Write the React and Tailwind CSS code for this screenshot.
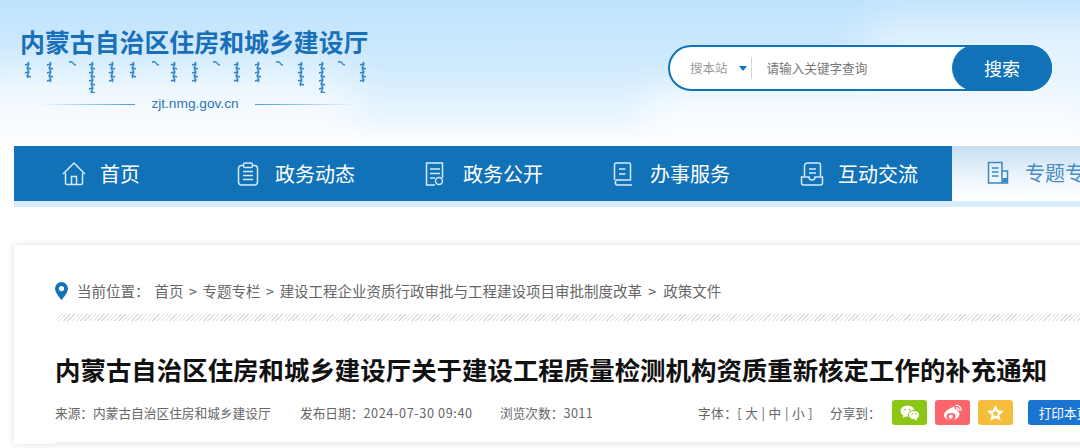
const FONT = "font-['Noto_Sans_CJK_SC','Liberation_Sans',sans-serif]";

const NAV = [
  { label: "首页", icon: <HomeIcon />, w: "w-[159px]", pad: "pl-[47px]", gap: "gap-[13px]" },
  { label: "政务动态", icon: <ClipIcon />, w: "w-[188px]", pad: "pl-[64px]", gap: "gap-[16px]" },
  { label: "政务公开", icon: <DocIcon />, w: "w-[187px]", pad: "pl-[64px]", gap: "gap-[18px]" },
  { label: "办事服务", icon: <GuideIcon />, w: "w-[187px]", pad: "pl-[65px]", gap: "gap-[17px]" },
  { label: "互动交流", icon: <TrayIcon />, w: "w-[217px]", pad: "pl-[65px]", gap: "gap-[14px]" },
];

// x and length of each wavy stem in the decorative line under the logo title
const STEMS = [
  [28, 16], [50, 19], [72, 5], [92, 29], [112, 17], [133, 15], [155, 3], [174, 17], [195, 20],
  [216, 6], [237, 17], [258, 18], [279, 6], [301, 22], [322, 30], [341, 6], [363, 20],
];

function stemPath(x, len) {
  if (len < 8) return `M${x - 3} 5q3 -1 4 1q1 2 3 2`;
  let d = `M${x} 5`;
  for (let y = 5, i = 0; y < 5 + len; y += 4, i++) {
    const dir = i % 2 ? -1.6 : 1.6;
    d += `q${dir} 2 0 4`;
    d += `m0 -2l${i % 2 ? 3 : -3} 1m${i % 2 ? -3 : 3} -1m0 2`;
  }
  return d;
}

function HomeIcon() {
  return (
    <svg width="26" height="26" viewBox="0 0 26 26" fill="none" stroke="currentColor" strokeWidth="1.5" className="text-[#d5e9f8]">
      <path d="M2 13 13 2l11 11" />
      <path d="M4.500 12v10a1.500 1.500 0 0 0 1.500 1.500h14a1.500 1.500 0 0 0 1.500-1.500V12" />
      <path d="M10.500 23.500v-8h5v8" />
    </svg>
  );
}

function ClipIcon() {
  return (
    <svg width="22" height="24" viewBox="0 0 22 24" fill="none" stroke="currentColor" strokeWidth="1.5" className="text-[#d5e9f8]">
      <rect x="1.500" y="3.500" width="19" height="19.500" rx="3" />
      <rect x="6.500" y="1" width="9" height="4.500" rx="1.500" fill="#1272b8" />
      <path d="M6 9.500h10M6 13.500h10M6 17.500h10" />
    </svg>
  );
}

function DocIcon() {
  return (
    <svg width="20" height="24" viewBox="0 0 20 24" fill="none" stroke="currentColor" strokeWidth="1.5" className="text-[#d5e9f8]">
      <path d="M10 23H1.500V1h16v15" />
      <path d="M5 7h10M5 11.500h10M5 16h5" />
      <circle cx="14" cy="19" r="3.500" />
    </svg>
  );
}

function GuideIcon() {
  return (
    <svg width="20" height="24" viewBox="0 0 20 24" fill="none" stroke="currentColor" strokeWidth="1.5" className="text-[#d5e9f8]">
      <path d="M1.500 18V2.500a1.500 1.500 0 0 1 1.500-1.500h13a1.500 1.500 0 0 1 1.500 1.500V18H6a2.500 2.500 0 0 0-2 5h15" />
      <path d="M6 7h6.500M6 12h6.500" />
    </svg>
  );
}

function TrayIcon() {
  return (
    <svg width="24" height="24" viewBox="0 0 24 24" fill="none" stroke="currentColor" strokeWidth="1.5" className="text-[#d5e9f8]">
      <path d="M4.500 14V4a3 3 0 0 1 3-3h11a2 2 0 0 1 2 2v12" />
      <path d="M9 7h7M9 11h7" />
      <path d="M1.500 15v6a2 2 0 0 0 2 2h17a2 2 0 0 0 2-2v-6H15a3 3 0 0 1-6 0z" />
    </svg>
  );
}

function BookIcon() {
  return (
    <svg width="22" height="24" viewBox="0 0 22 24" fill="none" stroke="currentColor" strokeWidth="1.5">
      <path d="M15 22H1.500V1.500H15z" />
      <path d="M15 10h5.500v12H15" />
      <path d="M5 7h6.500M5 11h6.500M5 15h6.500" />
      <rect x="15.500" y="17" width="4.500" height="4.500" fill="currentColor" stroke="none" />
    </svg>
  );
}

function PinIcon() {
  return (
    <svg width="13" height="18" viewBox="0 0 13 18" className="text-[#1272b8]">
      <path
        fill="currentColor"
        fillRule="evenodd"
        d="M6.500 0A6.500 6.500 0 0 0 0 6.500C0 11 6.500 18 6.500 18S13 11 13 6.500A6.500 6.500 0 0 0 6.500 0zm0 4a2.600 2.600 0 1 1 0 5.200 2.600 2.600 0 0 1 0-5.200z"
      />
    </svg>
  );
}

function WechatIcon() {
  return (
    <svg width="20" height="16" viewBox="0 0 20 16" fill="#fff">
      <ellipse cx="7.500" cy="6" rx="7" ry="5.600" />
      <path d="M3.500 9.500 3 13l3.500-2z" />
      <ellipse cx="14" cy="10" rx="5.600" ry="4.600" stroke="#8cc716" strokeWidth="1" />
      <path d="M16.500 13.500 17.500 16l-3.500-2z" />
      <circle cx="5.200" cy="4.600" r="0.900" fill="#8cc716" />
      <circle cx="9.800" cy="4.600" r="0.900" fill="#8cc716" />
      <circle cx="12.300" cy="9" r="0.700" fill="#8cc716" />
      <circle cx="15.800" cy="9" r="0.700" fill="#8cc716" />
    </svg>
  );
}

function WeiboIcon() {
  return (
    <svg width="20" height="17" viewBox="0 0 20 17" fill="none">
      <path
        fill="#fff"
        fillRule="evenodd"
        d="M8 4c2-1.500 3.500-1.500 3.800-.5.200.7 0 1.500-.2 2 1.800-.6 3.200-.3 3.200 1 0 .6-.3 1-.3 1C16 8 16.500 9 16.500 10c0 3-3.700 6-8.200 6C4.200 16 1 14 1 11c0-2.300 3-5.500 7-7zm0 5A4.500 3.400 0 1 0 8 15.800 4.500 3.400 0 1 0 8 9z"
      />
      <circle cx="7.800" cy="12.400" r="2" fill="#fff" />
      <path d="M13 1.500c3-.5 5.500 2 5 5M13.500 4c1.500-.2 2.700 1 2.500 2.500" stroke="#fff" strokeWidth="1.300" strokeLinecap="round" />
    </svg>
  );
}

function StarIcon() {
  return (
    <svg width="17" height="16" viewBox="0 0 17 16">
      <path
        fill="#fff"
        fillRule="evenodd"
        d="M8.500 0l2.500 5.300 5.800.7-4.300 4 1.100 5.800-5.100-2.900-5.100 2.900 1.100-5.800L.2 6l5.800-.7zM8.500 5l-1 2.200-2.400.3 1.800 1.600-.5 2.400 2.100-1.200 2.100 1.200-.5-2.400 1.800-1.600-2.400-.3z"
      />
    </svg>
  );
}

function Header() {
  return (
    <div className="relative h-[146px] overflow-hidden bg-[linear-gradient(180deg,#bfe3fd_0%,#cfeafd_45%,#e9f5fe_80%,#ffffff_100%)]">
      {/* clouds */}
      <div className="absolute left-[-60px] top-[70px] h-[90px] w-[420px] rounded-full bg-white/60 blur-[22px]" />
      <div className="absolute left-[860px] top-[20px] h-[70px] w-[300px] rounded-full bg-white/50 blur-[20px]" />
      <div className="absolute left-[640px] top-[90px] h-[60px] w-[460px] rounded-full bg-white/70 blur-[18px]" />

      <div className="relative flex items-start justify-between pl-[20px] pr-[28px] pt-[25px]">
        <div className="w-[350px]">
          <div className="whitespace-nowrap text-[24.900px] font-bold leading-[32px] text-[#1a70b8]">
            内蒙古自治区住房和城乡建设厅
          </div>
          <svg width="350" height="36" viewBox="20 0 350 36" fill="none" stroke="#2f86c8" strokeWidth="1.400" className="block">
            {STEMS.map(([x, len]) => (
              <path key={x} d={stemPath(x, len)} />
            ))}
          </svg>
          <div className="mt-[2px] flex items-center">
            <span className="ml-[20px] h-px w-[95px] bg-gradient-to-r from-transparent to-[#4f9bd4]" />
            <span className="w-[120px] text-center font-['Liberation_Sans',sans-serif] text-[13.700px] leading-[18px] text-[#2a76b5]">
              zjt.nmg.gov.cn
            </span>
            <span className="h-px w-[100px] bg-gradient-to-r from-[#4f9bd4] to-transparent" />
          </div>
        </div>

        <div className="mt-[20px] flex h-[46px] w-[384px] items-center rounded-full border-2 border-[#1272b8] bg-white">
          <span className="ml-[20px] text-[12.500px] text-[#9a9a9a]">搜本站</span>
          <span className="ml-[11px] h-0 w-0 border-x-[4px] border-t-[5px] border-x-transparent border-t-[#1272b8]" />
          <span className="ml-[4px] h-[22px] w-px bg-[#d4d4d4]" />
          <span className="ml-[15px] text-[12.600px] text-[#777]">请输入关键字查询</span>
          <span className="ml-auto mr-[-2px] flex h-[46px] w-[100px] items-center justify-center rounded-full bg-[#1272b8] text-[18px] text-white">
            搜索
          </span>
        </div>
      </div>
    </div>
  );
}

function Nav() {
  return (
    <div className="ml-[14px] w-[1200px] border-b-[6px] border-[#d9ecfb]">
      <div className="flex h-[55px] items-stretch bg-[#1272b8] text-white">
        {NAV.map((n) => (
          <div key={n.label} className={`flex items-center ${n.gap} ${n.w} ${n.pad}`}>
            {n.icon}
            <span className="text-[20px]">{n.label}</span>
          </div>
        ))}
        <div className="mt-[-2px] flex flex-1 items-center gap-[16px] bg-[linear-gradient(180deg,#c2dcf0_0%,#eef6fc_60%,#ffffff_100%)] pl-[35px] text-[#3b87c4]">
          <BookIcon />
          <span className="whitespace-nowrap text-[20px] text-[#4a8cc2]">专题专栏</span>
        </div>
      </div>
    </div>
  );
}

function Article() {
  return (
    <div className="ml-[14px] mt-[38px] w-[1200px] bg-white pl-[41px] pt-[35px] shadow-[0_0_8px_rgba(0,0,0,0.12)]">
      <div className="flex h-[22px] items-center text-[14.500px] text-[#666]">
        <PinIcon />
        <span className="ml-[9px]">当前位置：</span>
        <span className="ml-[5px]">首页</span>
        <span className="mx-[5.500px]">&gt;</span>
        <span>专题专栏</span>
        <span className="mx-[5.500px]">&gt;</span>
        <span>建设工程企业资质行政审批与工程建设项目审批制度改革</span>
        <span className="ml-[6px] mr-[7px]">&gt;</span>
        <span>政策文件</span>
      </div>
      <div className="ml-[2px] mt-[12px] h-[7px] bg-[repeating-linear-gradient(135deg,#dcdcdc_0px,#dcdcdc_1px,#ffffff_1px,#ffffff_3px)]" />
      <h1 className="mt-[28px] whitespace-nowrap text-[25.440px] font-bold leading-[40px] text-[#111]">
        内蒙古自治区住房和城乡建设厅关于建设工程质量检测机构资质重新核定工作的补充通知
      </h1>
      <div className="mt-[11px] flex h-[25px] items-center whitespace-nowrap text-[12.700px] text-[#666]">
        <span className="w-[245px]">来源：内蒙古自治区住房和城乡建设厅</span>
        <span className="w-[200px]">
          发布日期：<span className="tracking-[0.6px]">2024-07-30 09:40</span>
        </span>
        <span className="w-[198px]">
          浏览次数：<span className="tracking-[0.4px]">3011</span>
        </span>
        <span className="w-[132px] tracking-[0.4px]">字体：[ 大 | 中 | 小 ]</span>
        <span className="w-[62px]">分享到：</span>
        <div className="flex gap-[8px]">
          <span className="flex h-[25px] w-[35px] items-center justify-center rounded-[3px] bg-[#8cc716]">
            <WechatIcon />
          </span>
          <span className="flex h-[25px] w-[35px] items-center justify-center rounded-[3px] bg-[#fb666c]">
            <WeiboIcon />
          </span>
          <span className="flex h-[25px] w-[35px] items-center justify-center rounded-[3px] bg-[#f6bd3c]">
            <StarIcon />
          </span>
        </div>
        <span className="ml-[15px] flex h-[25px] w-[72px] items-center justify-center rounded-[3px] bg-[#1a75d2] text-white">
          打印本页
        </span>
      </div>
      <div className="mt-[17px] h-[2px] bg-[#f0f0f0]" />
    </div>
  );
}

export default function App() {
  return (
    <div className={`h-[448px] w-[1080px] overflow-hidden bg-white ${FONT}`}>
      <Header />
      <Nav />
      <Article />
    </div>
  );
}
